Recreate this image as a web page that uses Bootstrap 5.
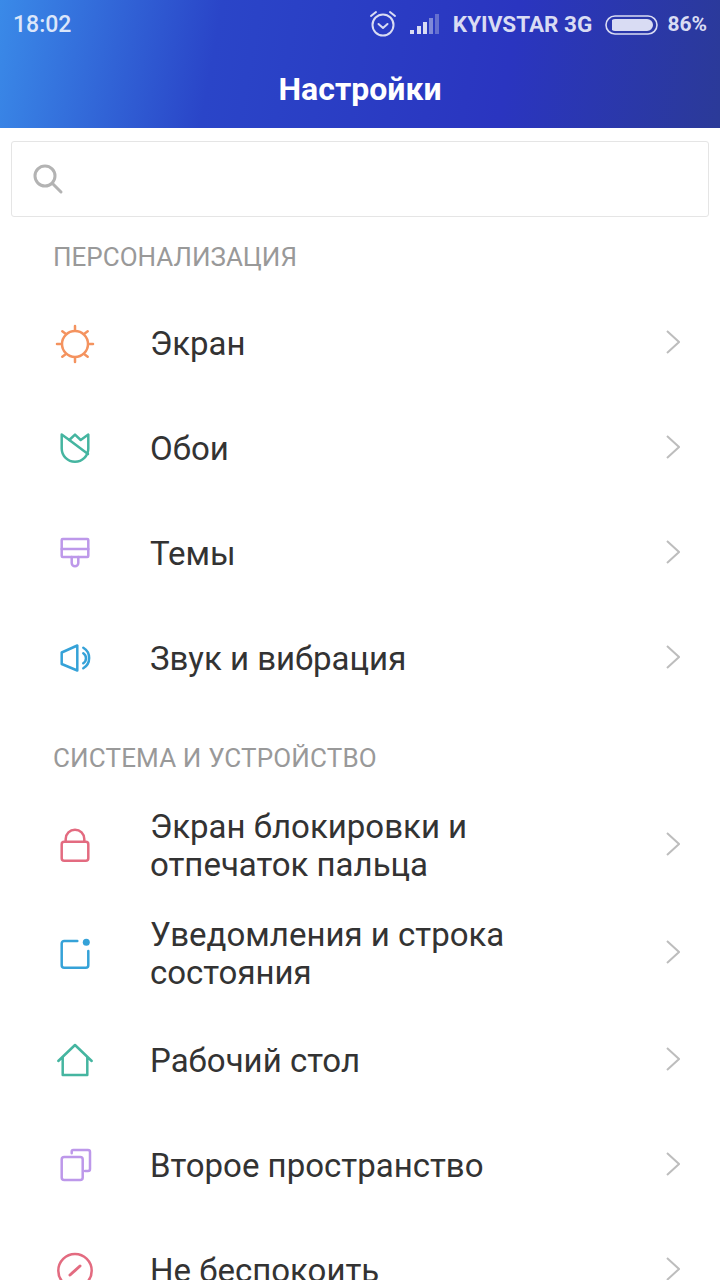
<!DOCTYPE html>
<html lang="ru">
<head>
  <meta charset="UTF-8">
  <title>Настройки</title>
  <link href="https://cdn.jsdelivr.net/npm/bootstrap@5.3.0/dist/css/bootstrap.min.css" rel="stylesheet">
  <style>
    html, body { height: 1280px; overflow: hidden; }
    body { font-family: Roboto, "Noto Sans", sans-serif; background: #fff; color: #333; }
    .top-head {
      height: 128px;
      background: linear-gradient(100deg, #3a8ae8 0%, #2a45c8 30%, #2a35c0 70%, #2b3a98 100%);
      color: #fff;
    }
    .status-line { height: 50px; padding: 0 13px; color: #d9dcf3; font-size: 23px; font-weight: 500; }
    .status-time { color: #dbe6fa; }
    .status-carrier { font-size: 22.5px; font-weight: 700; margin-left: 13px; }
    .status-pct { font-size: 21px; font-weight: 700; margin-left: 9px; }
    .status-alarm { margin-top: -2px; }
    .status-signal { margin-left: 13px; }
    .status-batt { margin-left: 13px; }
    .head-title { font-size: 32px; font-weight: 700; line-height: 36px; padding-top: 21px; text-align: center; color: #fff; }
    .search-box {
      height: 76px; margin: 13px 11px 0; padding-left: 20px;
      border: 1px solid #e5e5e5; border-radius: 3px;
    }
    .sec-title { font-size: 26px; line-height: 30px; color: #999; padding-left: 53px; }
    .sec-first { margin-top: 25px; margin-bottom: 20px; }
    .sec-second { margin-top: 31px; margin-bottom: 20px; letter-spacing: .15px; }
    .set-row { height: 105px; padding-left: 55px; padding-right: 40px; }
    .set-row.two-line { height: 108px; }
    .two-line .set-text { margin-top: -2px; line-height: 38px; }
    .set-icon { width: 40px; height: 40px; flex: none; margin-right: 55px; margin-top: -2px; }
    .set-text { flex: 1; font-size: 33px; line-height: 38.5px; color: #333; }
    .set-chev { width: 14px; height: 24px; flex: none; margin-top: -6px; }
    .ic { fill: none; stroke-width: 2.5; stroke-linecap: round; stroke-linejoin: round; }
    .c-orange { stroke: #f4935f; }
    .c-teal { stroke: #45b5a0; }
    .c-violet { stroke: #bd98ea; }
    .c-blue { stroke: #35a2d8; }
    .c-red { stroke: #e36b80; }
  </style>
</head>
<body>
  <div class="top-head">
    <div class="status-line d-flex align-items-center">
      <span class="status-time">18:02</span>
      <div class="ms-auto d-flex align-items-center">
        <svg class="status-alarm" width="28" height="28" viewBox="0 0 28 28" fill="none" stroke="#d9dcf3" stroke-width="2" stroke-linecap="round" stroke-linejoin="round">
          <circle cx="14" cy="15" r="10.5"/>
          <path d="M9.5 14l4.5 4 4.500-4"/>
          <path d="M2 6l5-4M26 6l-5-4"/>
        </svg>
        <svg class="status-signal" width="30" height="22" viewBox="0 0 30 22">
          <rect x="0" y="16" width="4" height="4" fill="#d9dcf3"/>
          <rect x="7" y="12" width="4" height="8" fill="#d9dcf3"/>
          <rect x="13" y="8" width="4" height="12" fill="#d9dcf3"/>
          <rect x="19" y="4" width="4" height="16" fill="#7f89d8"/>
          <rect x="25" y="0" width="4" height="20" fill="#6570cf"/>
        </svg>
        <span class="status-carrier">KYIVSTAR 3G</span>
        <svg class="status-batt" width="53" height="20" viewBox="0 0 53 20">
          <rect x="1" y="1" width="51" height="18" rx="9" fill="none" stroke="#d9dcf3" stroke-width="1.6"/>
          <path d="M10 4h32a6 6 0 0 1 0 12H10a6 6 0 0 1-3-1V5a6 6 0 0 1 3-1z" fill="#d9dcf3"/>
        </svg>
        <span class="status-pct">86%</span>
      </div>
    </div>
    <div class="head-title">Настройки</div>
  </div>

  <div class="search-box d-flex align-items-center">
    <svg width="32" height="32" viewBox="0 0 32 32" fill="none" stroke="#b3b3b3" stroke-width="3" stroke-linecap="round">
      <circle cx="13" cy="13" r="10"/>
      <path d="M20.500 20.500L29 29"/>
    </svg>
  </div>

  <div class="sec-title sec-first">ПЕРСОНАЛИЗАЦИЯ</div>

  <div class="set-row d-flex align-items-center">
    <svg class="set-icon ic c-orange" viewBox="0 0 40 40">
      <circle cx="20" cy="20" r="13"/>
      <path d="M20 2v3.500M20 34.500V38M2 20h3.500M34.500 20H38M7.300 7.300l3 2.200M32.700 7.300l-3 2.200M7.300 32.700l3-2.200M32.700 32.700l-3-2.200"/>
    </svg>
    <div class="set-text">Экран</div>
    <svg class="set-chev" viewBox="0 0 14 24" fill="none" stroke="#bdbdbd" stroke-width="2"><path d="M1 1l12 11L1 23"/></svg>
  </div>
  <div class="set-row d-flex align-items-center">
    <svg class="set-icon ic c-teal" viewBox="0 0 40 40">
      <path d="M6.700 5.600L14.300 11L20 5.600L25.700 11L33.300 5.600V19.400A13.300 13.300 0 0 1 6.700 19.400Z"/>
      <path d="M14.300 11L33 25"/>
    </svg>
    <div class="set-text">Обои</div>
    <svg class="set-chev" viewBox="0 0 14 24" fill="none" stroke="#bdbdbd" stroke-width="2"><path d="M1 1l12 11L1 23"/></svg>
  </div>
  <div class="set-row d-flex align-items-center">
    <svg class="set-icon ic c-violet" viewBox="0 0 40 40">
      <path d="M7.700 5h24.600a1 1 0 0 1 1 1v16a1 1 0 0 1-1 1H7.700a1 1 0 0 1-1-1V6a1 1 0 0 1 1-1z"/>
      <path d="M6.700 15h26.600M16.700 23v6a3.300 3.300 0 0 0 6.600 0v-6"/>
    </svg>
    <div class="set-text">Темы</div>
    <svg class="set-chev" viewBox="0 0 14 24" fill="none" stroke="#bdbdbd" stroke-width="2"><path d="M1 1l12 11L1 23"/></svg>
  </div>
  <div class="set-row d-flex align-items-center">
    <svg class="set-icon ic c-blue" viewBox="0 0 40 40">
      <path d="M6.700 13.500L22.300 6.500V31.500L6.700 25Z"/>
      <path d="M28.300 8.700A12 12 0 0 1 28.300 29.300M28.300 14.300A6 6 0 0 1 28.300 24.300"/>
    </svg>
    <div class="set-text">Звук и вибрация</div>
    <svg class="set-chev" viewBox="0 0 14 24" fill="none" stroke="#bdbdbd" stroke-width="2"><path d="M1 1l12 11L1 23"/></svg>
  </div>

  <div class="sec-title sec-second">СИСТЕМА И УСТРОЙСТВО</div>

  <div class="set-row two-line d-flex align-items-center">
    <svg class="set-icon ic c-red" viewBox="0 0 40 40">
      <rect x="6.700" y="15.700" width="26.600" height="19" rx="2.500"/>
      <path d="M10.700 15.700V13a9.300 9.300 0 0 1 18.600 0v2.700"/>
    </svg>
    <div class="set-text">Экран блокировки и<br>отпечаток пальца</div>
    <svg class="set-chev" viewBox="0 0 14 24" fill="none" stroke="#bdbdbd" stroke-width="2"><path d="M1 1l12 11L1 23"/></svg>
  </div>
  <div class="set-row two-line d-flex align-items-center">
    <svg class="set-icon ic c-blue" viewBox="0 0 40 40">
      <path d="M22.300 7H9.200a2.500 2.500 0 0 0-2.500 2.500v21.700a2.500 2.500 0 0 0 2.500 2.500h21.600a2.500 2.500 0 0 0 2.500-2.500V17"/>
      <circle cx="31.300" cy="8.300" r="3.500" fill="#35a2d8" stroke="none"/>
    </svg>
    <div class="set-text">Уведомления и строка<br>состояния</div>
    <svg class="set-chev" viewBox="0 0 14 24" fill="none" stroke="#bdbdbd" stroke-width="2"><path d="M1 1l12 11L1 23"/></svg>
  </div>
  <div class="set-row d-flex align-items-center">
    <svg class="set-icon ic c-teal" viewBox="0 0 40 40">
      <path d="M3.300 20L20 4L36.700 20M7.700 15.800V34H32.300V15.800"/>
    </svg>
    <div class="set-text">Рабочий стол</div>
    <svg class="set-chev" viewBox="0 0 14 24" fill="none" stroke="#bdbdbd" stroke-width="2"><path d="M1 1l12 11L1 23"/></svg>
  </div>
  <div class="set-row d-flex align-items-center">
    <svg class="set-icon ic c-violet" viewBox="0 0 40 40">
      <rect x="6.700" y="11" width="21" height="23" rx="2.500"/>
      <path d="M16.700 7.300V5.500A1.500 1.500 0 0 1 18.200 4H33a2 2 0 0 1 2 2v17a2 2 0 0 1-2 2h-3"/>
    </svg>
    <div class="set-text">Второе пространство</div>
    <svg class="set-chev" viewBox="0 0 14 24" fill="none" stroke="#bdbdbd" stroke-width="2"><path d="M1 1l12 11L1 23"/></svg>
  </div>
  <div class="set-row d-flex align-items-center">
    <svg class="set-icon ic c-red" viewBox="0 0 40 40">
      <circle cx="20" cy="19.700" r="16.700"/>
      <path d="M15 24l10-9" stroke-width="3"/>
    </svg>
    <div class="set-text">Не беспокоить</div>
    <svg class="set-chev" viewBox="0 0 14 24" fill="none" stroke="#bdbdbd" stroke-width="2"><path d="M1 1l12 11L1 23"/></svg>
  </div>
</body>
</html>
